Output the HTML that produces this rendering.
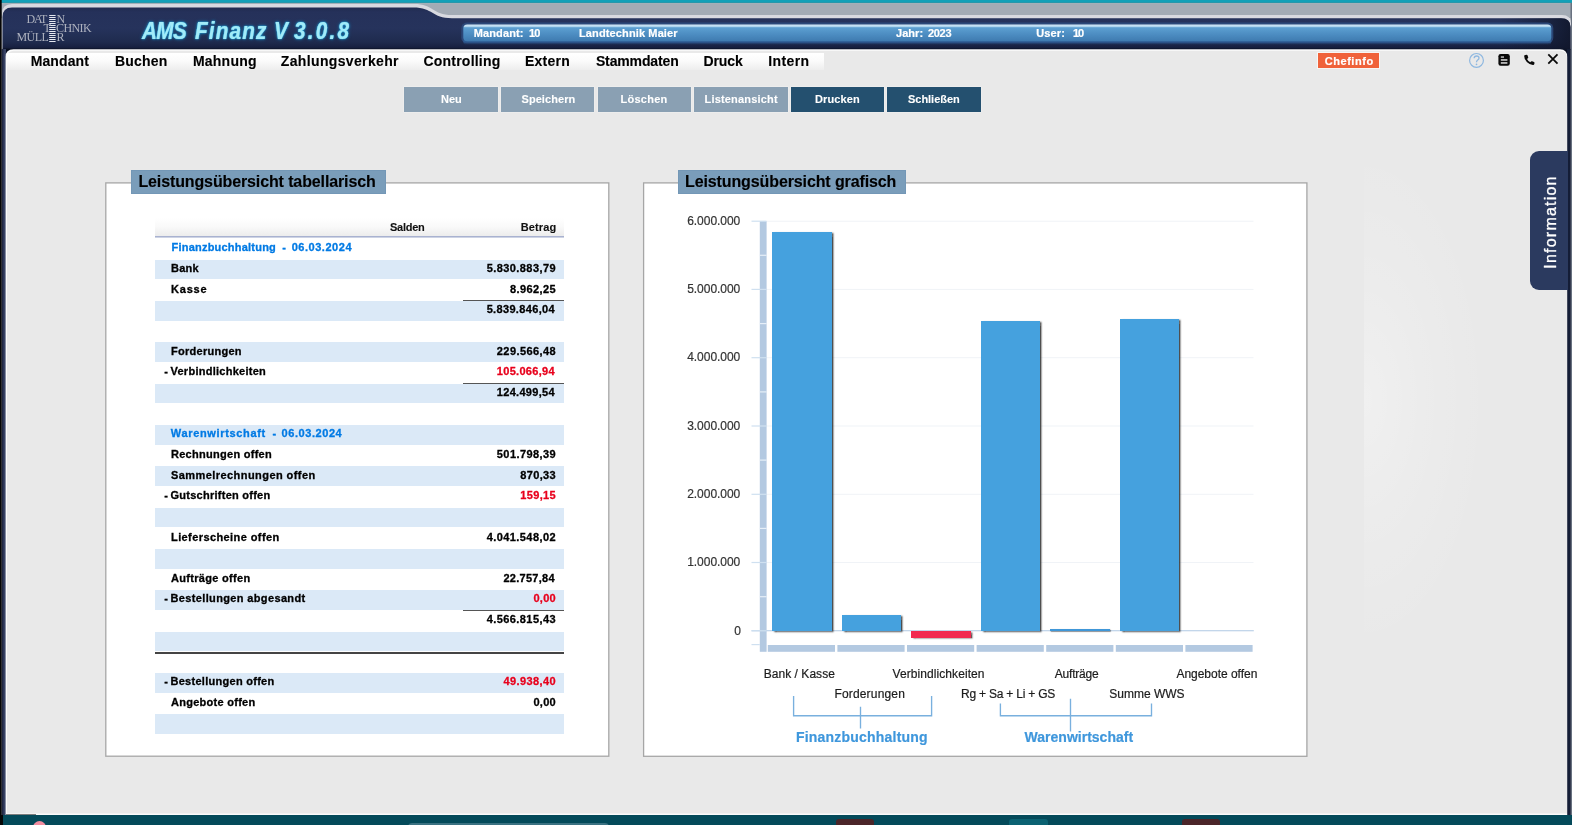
<!DOCTYPE html>
<html lang="de">
<head>
<meta charset="utf-8">
<title>AMS Finanz V 3.0.8</title>
<style>
html,body{margin:0;padding:0}
body{width:1572px;height:825px;overflow:hidden;position:relative;background:#e9e9e9;font-family:"Liberation Sans",sans-serif;font-weight:bold;color:#000}
.abs,.t,header,nav,main,section,footer,.stripe,.bar,.btn{position:absolute}
.t{white-space:pre;line-height:20px;height:20px;-webkit-text-stroke:.2px}
#app{position:absolute;left:0;top:0;width:1572px;height:825px;will-change:transform}
#frame{left:0;top:0;width:1572px;height:825px}
header{left:0;top:0;width:1572px;height:50px}
nav{left:7px;top:53px;width:817px;height:17px;background:linear-gradient(#ffffff,#fbfbfb 45%,#ededed)}
.btn{top:87.4px;height:24.2px;width:93.6px;background:#8aa0b3;box-shadow:0 0 0 .6px rgba(255,255,255,.35)}
.btn.on{background:#24506f}
.panel{position:absolute;background:#fff;border:1px solid #a3a3a3;box-sizing:border-box}
.ptitle{position:absolute;background:#7a9dba;box-shadow:inset 0 0 0 1px #7397b6;height:24.5px;top:169.9px}
.stripe{left:155.2px;width:408.8px;height:19.8px;background:#dbe9f7}
.bar{width:59.5px;background:#45a1de;box-shadow:1.6px 1px 1.6px rgba(20,20,20,.75)}
.bar.neg{background:#f2294f;box-shadow:1.6px 1.2px 1.6px rgba(40,20,20,.7)}
.bar.thin{background:#3f97d8;box-shadow:.8px .8px 1px rgba(20,20,20,.55)}
#info{left:1529.6px;top:151.3px;width:38px;height:138.7px;background:#2b3a5f;border-radius:9px 0 0 9px}
#info span{position:absolute;left:-29px;top:60.3px;width:100px;height:20px;line-height:20px;text-align:center;transform:rotate(-90deg);color:#fff;font-weight:normal;font-size:16px;letter-spacing:1.2px;-webkit-text-stroke:.3px;white-space:nowrap}
footer{left:0;top:815px;width:1572px;height:10px;background:#044a5a;overflow:hidden}
</style>
</head>
<body>
<div id="app">
<svg id="frame" class="abs" width="1572" height="825" viewBox="0 0 1572 825">
<defs>
<linearGradient id="navy" gradientUnits="userSpaceOnUse" x1="0" y1="7" x2="0" y2="49.5"><stop offset="0" stop-color="#212b4f"/><stop offset=".12" stop-color="#25315a"/><stop offset=".5" stop-color="#26335c"/><stop offset=".82" stop-color="#1f2b4e"/><stop offset=".95" stop-color="#172040"/><stop offset="1" stop-color="#090f20"/></linearGradient>
<linearGradient id="ibar" x1="0" y1="0" x2="0" y2="1"><stop offset="0" stop-color="#d6eaf8"/><stop offset=".11" stop-color="#b4d8f0"/><stop offset=".19" stop-color="#5c9fd1"/><stop offset=".6" stop-color="#4c8cc1"/><stop offset="1" stop-color="#3f7bb0"/></linearGradient>
<linearGradient id="rdark" gradientUnits="userSpaceOnUse" x1="1500" y1="0" x2="1571" y2="0"><stop offset="0" stop-color="#10162a" stop-opacity="0"/><stop offset=".7" stop-color="#10162a" stop-opacity=".55"/><stop offset="1" stop-color="#10162a" stop-opacity=".9"/></linearGradient>
<linearGradient id="under" x1="0" y1="0" x2="0" y2="1"><stop offset="0" stop-color="#30629c"/><stop offset=".55" stop-color="#2d5a92"/><stop offset="1" stop-color="#24406e" stop-opacity="0"/></linearGradient>
<linearGradient id="lside" x1="0" y1="0" x2="1" y2="0"><stop offset="0" stop-color="#161c34"/><stop offset="1" stop-color="#47537a"/></linearGradient>
</defs>
<rect x="0" y="0" width="1572" height="3.4" fill="#3c8f9c"/>
<rect x="0" y="0" width="1572" height="2.500" fill="#12a0b8"/>
<rect x="0" y="3.2" width="1572" height="15" fill="#a3abb5"/>
<rect x="1570.5" y="3" width="1.5" height="812" fill="#697280"/>
<path d="M2 815V14Q2 4 12 4H414C434 4 432 15 452 15H1562Q1571 15 1571 24V815Z" fill="#d8d9e0"/>
<path d="M2.5 815V17Q2.5 7.5 12 7.5H413C434 7.500 431 18.200 452 18.200H1561Q1570.500 18.200 1570.500 27V815Z" fill="url(#navy)"/>
<path d="M1500 18.200H1561Q1570.500 18.200 1570.500 27V50H1500Z" fill="url(#rdark)"/>
<rect x="1.600" y="49" width="4.200" height="766" fill="url(#lside)"/>
<rect x="1567" y="49" width="3.6" height="766" fill="#141d36"/>
<rect x="0" y="0" width="1.700" height="825" fill="#050505"/>
<path d="M5.600 815V57Q5.600 49.300 13.500 49.300H1560Q1567.200 49.300 1567.200 57V815Z" fill="#fbfbfb"/>
<path d="M7 813.600V58Q7 50.800 14 50.800H1560Q1567 50.800 1567 58V813.600Z" fill="#e9e9e9"/>
<rect x="461.300" y="22.600" width="1092" height="20.600" rx="5.500" fill="#2c4a7c" opacity=".9"/>
<rect x="463.300" y="38" width="1088" height="7" rx="3.500" fill="url(#under)"/>
<rect x="463.300" y="24.600" width="1088" height="16.600" rx="4" fill="url(#ibar)"/>
<rect x="49.2" y="15.0" width="6.4" height="1" fill="#e6e8f0"/>
<rect x="49.2" y="17.0" width="6.4" height="1" fill="#e6e8f0"/>
<rect x="49.2" y="19.0" width="6.4" height="1" fill="#e6e8f0"/>
<rect x="49.2" y="21.0" width="6.4" height="1" fill="#e6e8f0"/>
<rect x="49.2" y="23.0" width="6.4" height="1" fill="#e6e8f0"/>
<rect x="49.2" y="25.0" width="6.4" height="1" fill="#e6e8f0"/>
<rect x="49.2" y="27.0" width="6.4" height="1" fill="#e6e8f0"/>
<rect x="49.2" y="29.0" width="6.4" height="1" fill="#e6e8f0"/>
<rect x="49.2" y="31.0" width="6.4" height="1" fill="#e6e8f0"/>
<rect x="49.2" y="33.0" width="6.4" height="1" fill="#e6e8f0"/>
<rect x="49.2" y="35.0" width="6.4" height="1" fill="#e6e8f0"/>
<rect x="49.2" y="37.0" width="6.4" height="1" fill="#e6e8f0"/>
<rect x="49.2" y="39.0" width="6.4" height="1" fill="#e6e8f0"/>
<rect x="49.2" y="41.0" width="6.4" height="1" fill="#e6e8f0"/>
</svg>
<header>
<span class="t" style="left:26.50px;top:9.30px;font-size:12px;letter-spacing:-1.251px;font-weight:normal;font-family:'Liberation Serif',serif;color:#adb1be;-webkit-text-stroke:0;">DAT</span>
<span class="t" style="left:56.50px;top:9.30px;font-size:12px;font-weight:normal;font-family:'Liberation Serif',serif;color:#adb1be;-webkit-text-stroke:0;">N</span>
<span class="t" style="left:43.50px;top:18.20px;font-size:12px;font-weight:normal;font-family:'Liberation Serif',serif;color:#adb1be;-webkit-text-stroke:0;">T</span>
<span class="t" style="left:56.00px;top:18.20px;font-size:12px;letter-spacing:-0.583px;font-weight:normal;font-family:'Liberation Serif',serif;color:#adb1be;-webkit-text-stroke:0;">CHNIK</span>
<span class="t" style="left:16.50px;top:27.20px;font-size:12px;letter-spacing:-0.555px;font-weight:normal;font-family:'Liberation Serif',serif;color:#adb1be;-webkit-text-stroke:0;">MÜLL</span>
<span class="t" style="left:56.50px;top:27.20px;font-size:12px;font-weight:normal;font-family:'Liberation Serif',serif;color:#adb1be;-webkit-text-stroke:0;">R</span>
<span class="t" style="left:141.60px;top:20.80px;font-size:23px;letter-spacing:-0.662px;font-style:italic;color:#a2ebf8;transform:scaleX(0.900);transform-origin:0 50%;text-shadow:0 0 2px #1aa6de,0 0 4px rgba(22,140,200,.8),0 0 1px #2fbfee;">AMS</span>
<span class="t" style="left:195.30px;top:20.80px;font-size:23px;letter-spacing:1.312px;font-style:italic;color:#a2ebf8;transform:scaleX(0.900);transform-origin:0 50%;text-shadow:0 0 2px #1aa6de,0 0 4px rgba(22,140,200,.8),0 0 1px #2fbfee;">Finanz</span>
<span class="t" style="left:273.70px;top:20.80px;font-size:23px;font-style:italic;color:#a2ebf8;transform:scaleX(0.900);transform-origin:0 50%;text-shadow:0 0 2px #1aa6de,0 0 4px rgba(22,140,200,.8),0 0 1px #2fbfee;">V</span>
<span class="t" style="left:294.00px;top:20.80px;font-size:23px;letter-spacing:2.465px;font-style:italic;color:#a2ebf8;transform:scaleX(0.900);transform-origin:0 50%;text-shadow:0 0 2px #1aa6de,0 0 4px rgba(22,140,200,.8),0 0 1px #2fbfee;">3.0.8</span>
<span class="t" style="left:473.70px;top:23.40px;font-size:11px;letter-spacing:0.126px;color:#fff;">Mandant:</span>
<span class="t" style="left:529.00px;top:23.40px;font-size:11px;letter-spacing:-0.918px;color:#fff;">10</span>
<span class="t" style="left:579.00px;top:23.40px;font-size:11px;letter-spacing:0.125px;color:#fff;">Landtechnik Maier</span>
<span class="t" style="left:896.00px;top:23.40px;font-size:11px;letter-spacing:0.041px;color:#fff;">Jahr:</span>
<span class="t" style="left:927.90px;top:23.40px;font-size:11px;letter-spacing:-0.284px;color:#fff;">2023</span>
<span class="t" style="left:1036.20px;top:23.40px;font-size:11px;letter-spacing:0.160px;color:#fff;">User:</span>
<span class="t" style="left:1073.10px;top:23.40px;font-size:11px;letter-spacing:-1.318px;color:#fff;">10</span>
</header>
<nav></nav>
<span class="t" style="left:30.70px;top:51.10px;font-size:14px;letter-spacing:0.102px;-webkit-text-stroke:.12px;">Mandant</span>
<span class="t" style="left:114.90px;top:51.10px;font-size:14px;letter-spacing:0.223px;-webkit-text-stroke:.12px;">Buchen</span>
<span class="t" style="left:193.00px;top:51.10px;font-size:14px;letter-spacing:0.207px;-webkit-text-stroke:.12px;">Mahnung</span>
<span class="t" style="left:280.80px;top:51.10px;font-size:14px;letter-spacing:0.352px;-webkit-text-stroke:.12px;">Zahlungsverkehr</span>
<span class="t" style="left:423.50px;top:51.10px;font-size:14px;letter-spacing:0.210px;-webkit-text-stroke:.12px;">Controlling</span>
<span class="t" style="left:525.00px;top:51.10px;font-size:14px;letter-spacing:0.236px;-webkit-text-stroke:.12px;">Extern</span>
<span class="t" style="left:595.90px;top:51.10px;font-size:14px;letter-spacing:-0.130px;-webkit-text-stroke:.12px;">Stammdaten</span>
<span class="t" style="left:703.50px;top:51.10px;font-size:14px;letter-spacing:-0.099px;-webkit-text-stroke:.12px;">Druck</span>
<span class="t" style="left:768.20px;top:51.10px;font-size:14px;letter-spacing:0.392px;-webkit-text-stroke:.12px;">Intern</span>
<div class="abs" style="left:1318.2px;top:53.4px;width:61px;height:14.6px;background:#f0623a;box-shadow:0 0 0 1px #f8f6f4"></div>
<span class="t" style="left:1324.70px;top:50.60px;font-size:11px;letter-spacing:0.560px;color:#fff;">Chefinfo</span>
<svg class="abs" style="left:1460px;top:50px" width="105" height="22" viewBox="1460 50 105 22">
<circle cx="1476.500" cy="60.400" r="6.900" fill="none" stroke="#8fb8e0" stroke-width="1.200"/>
<path d="M1474.100 58.300Q1474.200 56 1476.600 56Q1479 56 1479 58Q1479 59.200 1477.700 60Q1476.500 60.800 1476.500 62.300" fill="none" stroke="#8fb8e0" stroke-width="1.300"/>
<circle cx="1476.500" cy="64.300" r=".85" fill="#8fb8e0"/>
<rect x="1498.400" y="54.100" width="11.400" height="11.600" rx="2.200" fill="#0a0a0a"/>
<rect x="1500.800" y="56.400" width="3.200" height="1.300" fill="#dcdcdc"/>
<rect x="1500.800" y="59.200" width="6.600" height="1.500" fill="#dcdcdc"/>
<rect x="1500.800" y="62.200" width="6.600" height="1.500" fill="#dcdcdc"/>
<path d="M1524.200 56.300Q1524.100 55 1525.300 54.900L1526.700 54.700Q1527.400 54.700 1527.600 55.400L1528.200 57.300Q1528.400 57.900 1527.900 58.300L1527 59Q1528.200 61.200 1530.300 62.300L1531 61.500Q1531.400 61 1532.100 61.200L1534 62Q1534.600 62.300 1534.500 63L1534.300 64.100Q1534.100 65.100 1532.900 65Q1529.300 64.700 1526.800 62.100Q1524.400 59.600 1524.200 56.300Z" fill="#0a0a0a"/>
<path d="M1548.300 54.400L1557.500 63.600M1557.500 54.400L1548.300 63.600" stroke="#0a0a0a" stroke-width="1.800" fill="none"/>
</svg>

<div class="btn" style="left:404.200px"></div>
<div class="btn" style="left:500.900px"></div>
<div class="btn" style="left:597.500px"></div>
<div class="btn" style="left:694.200px"></div>
<div class="btn on" style="left:790.700px"></div>
<div class="btn on" style="left:887.300px"></div>
<span class="t" style="left:441.00px;top:89.20px;font-size:11px;letter-spacing:-0.031px;color:#fff;-webkit-text-stroke:.1px;">Neu</span>
<span class="t" style="left:521.50px;top:89.20px;font-size:11px;letter-spacing:0.067px;color:#fff;-webkit-text-stroke:.1px;">Speichern</span>
<span class="t" style="left:620.50px;top:89.20px;font-size:11px;letter-spacing:0.248px;color:#fff;-webkit-text-stroke:.1px;">Löschen</span>
<span class="t" style="left:704.50px;top:89.20px;font-size:11px;letter-spacing:0.188px;color:#fff;-webkit-text-stroke:.1px;">Listenansicht</span>
<span class="t" style="left:815.00px;top:89.20px;font-size:11px;letter-spacing:0.117px;color:#fff;-webkit-text-stroke:.1px;">Drucken</span>
<span class="t" style="left:908.00px;top:89.20px;font-size:11px;letter-spacing:-0.030px;color:#fff;-webkit-text-stroke:.1px;">Schließen</span>

<main>
<section>
<svg class="abs" style="left:100px;top:178px" width="515" height="584" viewBox="100 178 515 584"><rect x="105.800" y="182.900" width="503" height="573.300" fill="#fff" stroke="#a6a6a6" stroke-width="1.300"/></svg>
<div class="ptitle" style="left:130.500px;width:255.400px"></div>
<div class="abs" style="left:155.200px;top:216px;width:408.800px;height:20.200px;background:linear-gradient(#ffffff 10%,#f9f9f9 55%,#ececec)"></div>
<div class="abs" style="left:155.200px;top:236px;width:408.800px;height:1px;background:#a9b2d0"></div>
<div class="abs" style="left:155.200px;top:237px;width:408.800px;height:1px;background:#cdd3e4"></div>
<div class="stripe" style="top:259.7px"></div>
<div class="stripe" style="top:301.0px"></div>
<div class="stripe" style="top:342.3px"></div>
<div class="stripe" style="top:383.6px"></div>
<div class="stripe" style="top:424.9px"></div>
<div class="stripe" style="top:466.3px"></div>
<div class="stripe" style="top:507.6px"></div>
<div class="stripe" style="top:548.9px"></div>
<div class="stripe" style="top:590.2px"></div>
<div class="stripe" style="top:631.5px"></div>
<div class="stripe" style="top:672.8px"></div>
<div class="stripe" style="top:714.1px"></div>
<div class="abs" style="left:463.400px;top:300.3px;width:100.600px;height:1px;background:#555"></div>
<div class="abs" style="left:463.400px;top:383.1px;width:100.600px;height:1px;background:#555"></div>
<div class="abs" style="left:463.400px;top:610.1px;width:100.600px;height:1px;background:#555"></div>
<div class="abs" style="left:155.200px;top:652px;width:408.800px;height:1.600px;background:#444"></div>
<span class="t" style="left:390.00px;top:217.30px;font-size:11px;letter-spacing:-0.270px;color:#111;-webkit-text-stroke:.1px;">Salden</span>
<span class="t" style="left:520.80px;top:217.30px;font-size:11px;letter-spacing:0.115px;color:#111;-webkit-text-stroke:.1px;">Betrag</span>
<span class="t" style="left:171.50px;top:237.35px;font-size:11px;letter-spacing:0.219px;color:#007ae4;-webkit-text-stroke:.3px;">Finanzbuchhaltung</span>
<span class="t" style="left:282.20px;top:237.35px;font-size:11px;color:#007ae4;-webkit-text-stroke:.3px;">-</span>
<span class="t" style="left:291.70px;top:237.35px;font-size:11px;letter-spacing:0.529px;color:#007ae4;-webkit-text-stroke:.3px;">06.03.2024</span>
<span class="t" style="left:171.00px;top:258.01px;font-size:11px;letter-spacing:0.240px;-webkit-text-stroke:.3px;">Bank</span>
<span class="t" style="left:171.00px;top:278.66px;font-size:11px;letter-spacing:0.801px;-webkit-text-stroke:.3px;">Kasse</span>
<span class="t" style="left:171.00px;top:340.63px;font-size:11px;letter-spacing:0.269px;-webkit-text-stroke:.3px;">Forderungen</span>
<span class="t" style="left:170.50px;top:361.28px;font-size:11px;letter-spacing:0.259px;-webkit-text-stroke:.3px;">Verbindlichkeiten</span>
<span class="t" style="left:164.20px;top:361.28px;font-size:11px;-webkit-text-stroke:.3px;">-</span>
<span class="t" style="left:170.80px;top:423.25px;font-size:11px;letter-spacing:0.664px;color:#007ae4;-webkit-text-stroke:.3px;">Warenwirtschaft</span>
<span class="t" style="left:272.60px;top:423.25px;font-size:11px;color:#007ae4;-webkit-text-stroke:.3px;">-</span>
<span class="t" style="left:281.50px;top:423.25px;font-size:11px;letter-spacing:0.574px;color:#007ae4;-webkit-text-stroke:.3px;">06.03.2024</span>
<span class="t" style="left:171.00px;top:443.90px;font-size:11px;letter-spacing:0.278px;-webkit-text-stroke:.3px;">Rechnungen offen</span>
<span class="t" style="left:171.00px;top:464.56px;font-size:11px;letter-spacing:0.435px;-webkit-text-stroke:.3px;">Sammelrechnungen offen</span>
<span class="t" style="left:170.50px;top:485.21px;font-size:11px;letter-spacing:0.258px;-webkit-text-stroke:.3px;">Gutschriften offen</span>
<span class="t" style="left:164.20px;top:485.21px;font-size:11px;-webkit-text-stroke:.3px;">-</span>
<span class="t" style="left:171.00px;top:526.52px;font-size:11px;letter-spacing:0.409px;-webkit-text-stroke:.3px;">Lieferscheine offen</span>
<span class="t" style="left:171.00px;top:567.83px;font-size:11px;letter-spacing:0.312px;-webkit-text-stroke:.3px;">Aufträge offen</span>
<span class="t" style="left:170.50px;top:588.48px;font-size:11px;letter-spacing:0.359px;-webkit-text-stroke:.3px;">Bestellungen abgesandt</span>
<span class="t" style="left:164.20px;top:588.48px;font-size:11px;-webkit-text-stroke:.3px;">-</span>
<span class="t" style="left:170.50px;top:671.11px;font-size:11px;letter-spacing:0.277px;-webkit-text-stroke:.3px;">Bestellungen offen</span>
<span class="t" style="left:164.20px;top:671.11px;font-size:11px;-webkit-text-stroke:.3px;">-</span>
<span class="t" style="left:171.00px;top:691.76px;font-size:11px;letter-spacing:0.274px;-webkit-text-stroke:.3px;">Angebote offen</span>
<span class="t" style="left:486.67px;top:258.01px;font-size:11px;letter-spacing:0.429px;-webkit-text-stroke:.3px;">5.830.883,79</span>
<span class="t" style="left:510.08px;top:278.66px;font-size:11px;letter-spacing:0.388px;-webkit-text-stroke:.3px;">8.962,25</span>
<span class="t" style="left:486.67px;top:299.31px;font-size:11px;letter-spacing:0.338px;-webkit-text-stroke:.3px;">5.839.846,04</span>
<span class="t" style="left:496.84px;top:340.63px;font-size:11px;letter-spacing:0.413px;-webkit-text-stroke:.3px;">229.566,48</span>
<span class="t" style="left:496.84px;top:361.28px;font-size:11px;letter-spacing:0.302px;color:#e8001c;-webkit-text-stroke:.3px;">105.066,94</span>
<span class="t" style="left:496.84px;top:381.94px;font-size:11px;letter-spacing:0.302px;-webkit-text-stroke:.3px;">124.499,54</span>
<span class="t" style="left:496.84px;top:443.90px;font-size:11px;letter-spacing:0.413px;-webkit-text-stroke:.3px;">501.798,39</span>
<span class="t" style="left:520.25px;top:464.56px;font-size:11px;letter-spacing:0.344px;-webkit-text-stroke:.3px;">870,33</span>
<span class="t" style="left:520.25px;top:485.21px;font-size:11px;letter-spacing:0.344px;color:#e8001c;-webkit-text-stroke:.3px;">159,15</span>
<span class="t" style="left:486.67px;top:526.52px;font-size:11px;letter-spacing:0.429px;-webkit-text-stroke:.3px;">4.041.548,02</span>
<span class="t" style="left:503.46px;top:567.83px;font-size:11px;letter-spacing:0.277px;-webkit-text-stroke:.3px;">22.757,84</span>
<span class="t" style="left:533.49px;top:588.48px;font-size:11px;letter-spacing:0.239px;color:#e8001c;-webkit-text-stroke:.3px;">0,00</span>
<span class="t" style="left:486.67px;top:609.14px;font-size:11px;letter-spacing:0.429px;-webkit-text-stroke:.3px;">4.566.815,43</span>
<span class="t" style="left:503.46px;top:671.11px;font-size:11px;letter-spacing:0.402px;color:#e8001c;-webkit-text-stroke:.3px;">49.938,40</span>
<span class="t" style="left:533.49px;top:691.76px;font-size:11px;letter-spacing:0.239px;-webkit-text-stroke:.3px;">0,00</span>
</section>
<section>
<svg class="abs" style="left:638px;top:178px" width="675" height="584" viewBox="638 178 675 584"><rect x="643.600" y="182.900" width="663.300" height="573.400" fill="#fff" stroke="#a6a6a6" stroke-width="1.300"/></svg>
<div class="ptitle" style="left:677.600px;width:228.400px"></div>
<svg class="abs" style="left:640px;top:200px" width="670" height="555" viewBox="640 200 670 555">
<rect x="767" y="562.0" width="486.5" height="1" fill="#f0f3f7"/>
<rect x="767" y="493.8" width="486.5" height="1" fill="#f0f3f7"/>
<rect x="767" y="425.5" width="486.5" height="1" fill="#f0f3f7"/>
<rect x="767" y="357.2" width="486.5" height="1" fill="#f0f3f7"/>
<rect x="767" y="288.9" width="486.5" height="1" fill="#f0f3f7"/>
<rect x="767" y="220.7" width="486.5" height="1" fill="#f0f3f7"/>
<rect x="751.5" y="630.1" width="502.3" height="1.2" fill="#bdd2e8"/>
<rect x="759.8" y="221.2" width="6.8" height="430.6" fill="#b3c9e1"/>
<rect x="751.5" y="630.2" width="15.1" height="1.2" fill="#cfe0f0"/>
<rect x="759.8" y="596.1" width="6.8" height="1.2" fill="#e6eff8"/>
<rect x="751.5" y="561.9" width="15.1" height="1.2" fill="#cfe0f0"/>
<rect x="759.8" y="527.8" width="6.8" height="1.2" fill="#e6eff8"/>
<rect x="751.5" y="493.7" width="15.1" height="1.2" fill="#cfe0f0"/>
<rect x="759.8" y="459.5" width="6.8" height="1.2" fill="#e6eff8"/>
<rect x="751.5" y="425.4" width="15.1" height="1.2" fill="#cfe0f0"/>
<rect x="759.8" y="391.3" width="6.8" height="1.2" fill="#e6eff8"/>
<rect x="751.5" y="357.1" width="15.1" height="1.2" fill="#cfe0f0"/>
<rect x="759.8" y="323.0" width="6.8" height="1.2" fill="#e6eff8"/>
<rect x="751.5" y="288.8" width="15.1" height="1.2" fill="#cfe0f0"/>
<rect x="759.8" y="254.7" width="6.8" height="1.2" fill="#e6eff8"/>
<rect x="751.5" y="220.6" width="15.1" height="1.2" fill="#cfe0f0"/>
<rect x="751.5" y="644.0" width="8.3" height="1.2" fill="#cfe0f0"/>
<rect x="767.8" y="645.0" width="67.2" height="6.8" fill="#b3c9e1"/>
<rect x="837.4" y="645.0" width="67.2" height="6.8" fill="#b3c9e1"/>
<rect x="907.0" y="645.0" width="67.2" height="6.8" fill="#b3c9e1"/>
<rect x="976.6" y="645.0" width="67.2" height="6.8" fill="#b3c9e1"/>
<rect x="1046.2" y="645.0" width="67.2" height="6.8" fill="#b3c9e1"/>
<rect x="1115.8" y="645.0" width="67.2" height="6.8" fill="#b3c9e1"/>
<rect x="1185.4" y="645.0" width="67.2" height="6.8" fill="#b3c9e1"/>
<path d="M793.6 696.1V715.7H931.6V696.1M860.5 706.8V728.5" fill="none" stroke="#79b0de" stroke-width="1.35"/>
<path d="M1000.4 703.6V715.7H1151.5V703.6M1070.5 698.8V731.4" fill="none" stroke="#79b0de" stroke-width="1.35"/>
</svg>
<div class="bar" style="left:772.3px;top:232.1px;height:398.7px"></div>
<div class="bar" style="left:841.8px;top:615.1px;height:15.7px"></div>
<div class="bar neg" style="left:911.4px;top:630.8px;height:7.2px"></div>
<div class="bar" style="left:980.9px;top:320.6px;height:310.2px"></div>
<div class="bar thin" style="left:1050.4px;top:629.2px;height:1.6px"></div>
<div class="bar" style="left:1119.9px;top:319.0px;height:311.8px"></div>
<span class="t" style="left:734.30px;top:620.50px;font-size:12px;font-weight:normal;color:#333;">0</span>
<span class="t" style="left:687.20px;top:552.23px;font-size:12px;letter-spacing:-0.039px;font-weight:normal;color:#333;">1.000.000</span>
<span class="t" style="left:687.20px;top:483.96px;font-size:12px;letter-spacing:-0.039px;font-weight:normal;color:#333;">2.000.000</span>
<span class="t" style="left:687.20px;top:415.69px;font-size:12px;letter-spacing:-0.039px;font-weight:normal;color:#333;">3.000.000</span>
<span class="t" style="left:687.20px;top:347.42px;font-size:12px;letter-spacing:-0.039px;font-weight:normal;color:#333;">4.000.000</span>
<span class="t" style="left:687.20px;top:279.15px;font-size:12px;letter-spacing:-0.039px;font-weight:normal;color:#333;">5.000.000</span>
<span class="t" style="left:687.20px;top:210.88px;font-size:12px;letter-spacing:-0.039px;font-weight:normal;color:#333;">6.000.000</span>
<span class="t" style="left:763.70px;top:663.60px;font-size:12px;letter-spacing:0.043px;font-weight:normal;color:#1c1c1c;">Bank / Kasse</span>
<span class="t" style="left:892.50px;top:663.60px;font-size:12px;letter-spacing:0.078px;font-weight:normal;color:#1c1c1c;">Verbindlichkeiten</span>
<span class="t" style="left:1054.80px;top:663.60px;font-size:12px;letter-spacing:-0.213px;font-weight:normal;color:#1c1c1c;">Aufträge</span>
<span class="t" style="left:1176.40px;top:663.60px;font-size:12px;letter-spacing:-0.016px;font-weight:normal;color:#1c1c1c;">Angebote offen</span>
<span class="t" style="left:834.40px;top:683.80px;font-size:12px;letter-spacing:0.176px;font-weight:normal;color:#1c1c1c;">Forderungen</span>
<span class="t" style="left:961.00px;top:683.80px;font-size:12px;letter-spacing:-0.214px;font-weight:normal;color:#1c1c1c;">Rg + Sa + Li + GS</span>
<span class="t" style="left:1109.20px;top:683.80px;font-size:12px;letter-spacing:0.009px;font-weight:normal;color:#1c1c1c;">Summe WWS</span>
<span class="t" style="left:796.00px;top:726.50px;font-size:14px;letter-spacing:0.208px;color:#3f97dc;">Finanzbuchhaltung</span>
<span class="t" style="left:1024.60px;top:726.50px;font-size:14px;letter-spacing:0.005px;color:#3f97dc;">Warenwirtschaft</span>
</section>
<span class="t" style="left:138.40px;top:172.00px;font-size:16px;letter-spacing:-0.119px;-webkit-text-stroke:.12px;">Leistungsübersicht tabellarisch</span>
<span class="t" style="left:685.00px;top:172.00px;font-size:16px;letter-spacing:-0.111px;-webkit-text-stroke:.12px;">Leistungsübersicht grafisch</span>
</main>

<div class="abs" style="left:1364px;top:150px;width:140px;height:520px;background:radial-gradient(ellipse 125px 255px at 0% 48%,rgba(255,255,255,.32),rgba(255,255,255,.13) 50%,rgba(255,255,255,0) 100%)"></div>
<div id="info" class="abs"><span>Information</span></div>

<footer>
<div class="abs" style="left:33px;top:6px;width:13px;height:13px;border-radius:50%;background:#f08da0"></div>
<div class="abs" style="left:408px;top:7.600px;width:200.500px;height:10px;border-radius:4px;background:#3b7282"></div>
<div class="abs" style="left:835.800px;top:4px;width:38.600px;height:10px;border-radius:3px;background:#4b2529"></div>
<div class="abs" style="left:1008.600px;top:4px;width:39px;height:10px;border-radius:3px;background:#0b6272"></div>
<div class="abs" style="left:1181.800px;top:4px;width:38.600px;height:10px;border-radius:3px;background:#4b2529"></div>
</footer>
<div class="abs" style="left:6px;top:814.200px;width:30px;height:1px;background:#7c7c7c"></div>
<div class="abs" style="left:0;top:815px;width:2.500px;height:10px;background:#060606"></div>
</div>
</body>
</html>
